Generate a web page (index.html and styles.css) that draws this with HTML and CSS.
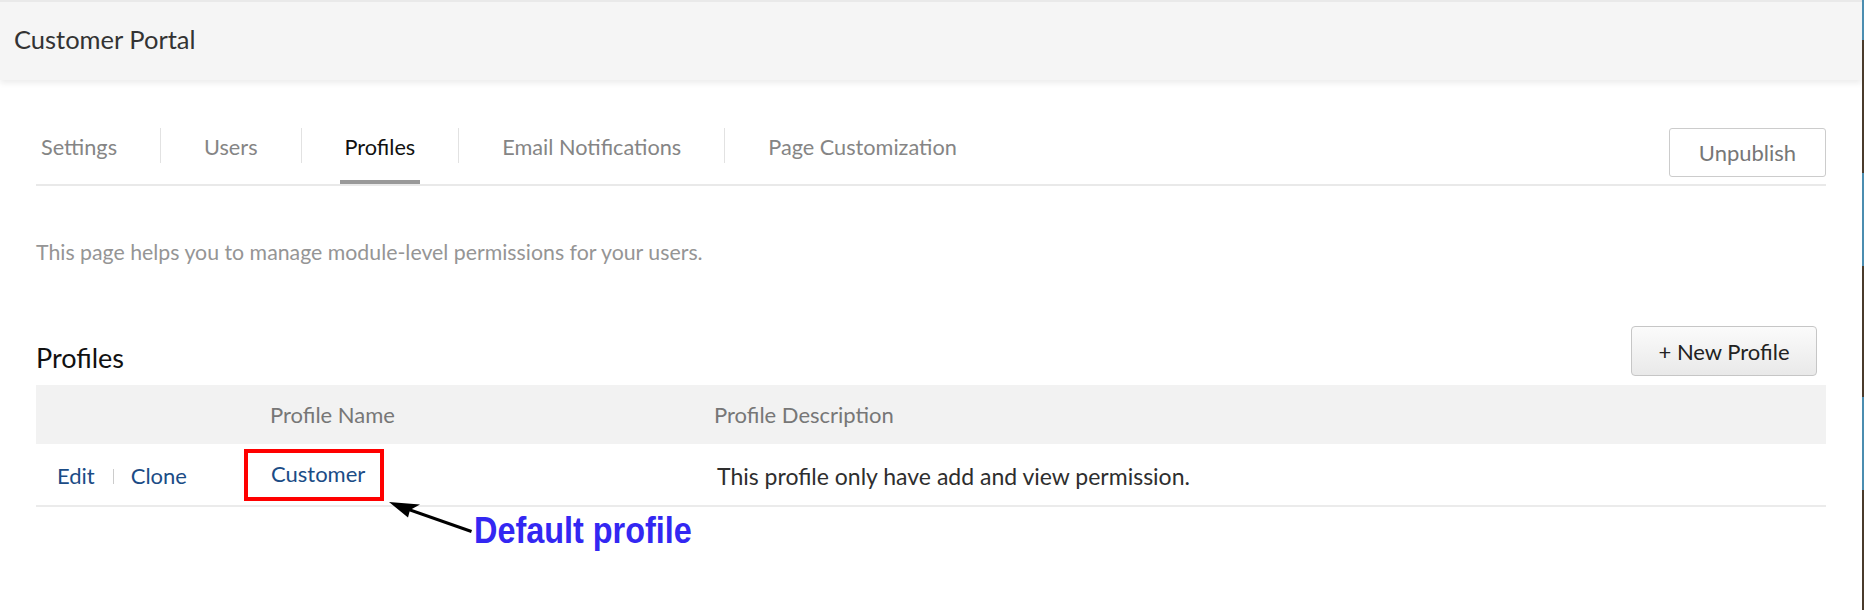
FILE: index.html
```html
<!DOCTYPE html>
<html>
  <head>
    <link rel="stylesheet" href="styles.css">
  </head>

  <body>
    <div class="page">
      <div class="main">
        <header class="topbar">
          <span class="title">Customer Portal</span>
        </header>

        <div class="content">
          <nav class="tabs">
            <a class="tab">Settings</a>
            <span class="sep"></span>
            <a class="tab">Users</a>
            <span class="sep"></span>
            <a class="tab active">Profiles</a>
            <span class="sep"></span>
            <a class="tab">Email Notifications</a>
            <span class="sep"></span>
            <a class="tab">Page Customization</a>
            <button class="btn-outline">Unpublish</button>
          </nav>

          <p class="intro">This page helps you to manage module-level permissions for your users.</p>

          <div class="section-head">
            <h2>Profiles</h2>
            <button class="btn-new">+ New Profile</button>
          </div>

          <div class="table">
            <div class="row thead">
              <div></div>
              <div>Profile Name</div>
              <div>Profile Description</div>
            </div>
            <div class="row trow">
              <div class="actions">
                <a>Edit</a>
                <span class="pipe"></span>
                <a>Clone</a>
              </div>
              <div class="name"><a>Customer</a></div>
              <div class="desc">This profile only have add and view permission.</div>
            </div>

            <!-- annotation drawn over the screenshot -->
            <div class="note-box"></div>
            <svg class="note-arrow" width="110" height="50" viewBox="0 0 110 50">
              <line x1="30" y1="19.5" x2="95.5" y2="42.5" stroke="#000" stroke-width="3"/>
              <polygon points="13,13 44,15.5 34,21 32,28.5" fill="#000"/>
            </svg>
            <span class="note-text">Default profile</span>
          </div>
        </div>
      </div>
      <div class="edge"></div>
    </div>
  </body>
</html>
```

FILE: styles.css
```css
* {
  box-sizing: border-box;
}

body {
  margin: 0;
  font-family: Lato, "Open Sans", sans-serif;
  color: #333;
  background: #fff;
}

.page {
  display: flex;
  min-height: 610px;
}

.main {
  flex: 1;
}

.edge {
  width: 2px;
  background: linear-gradient(to bottom,
    #4b8db0 0 40px, #4a3b2c 40px 173px,
    #4b8db0 173px 266px, #4a3b2c 266px 397px,
    #4b8db0 397px 490px, #4a3b2c 490px);
}

.topbar {
  height: 80px;
  display: flex;
  align-items: center;
  padding: 0 14px 4px;
  border-top: 2px solid #e9e9e9;
  background: #f5f5f5;
  box-shadow: 0 3px 6px rgba(0, 0, 0, 0.08);
}

.title {
  font-size: 25.5px;
  color: #333;
}

.content {
  padding: 48px 36px 0;
}

/* tabs */
.tabs {
  display: flex;
  align-items: flex-end;
  gap: 38px;
  border-bottom: 2px solid #e9e9e9;
}

.tab {
  font-size: 21.7px;
  line-height: 26px;
  color: #858585;
  padding: 0 5px 20px;
  border-bottom: 4px solid transparent;
  cursor: pointer;
}

.tab.active {
  color: #111;
  border-bottom-color: #999;
}

.sep {
  width: 1px;
  height: 35px;
  margin-bottom: 21px;
  background: #e2e2e2;
}

.btn-outline {
  margin-left: auto;
  margin-bottom: 7px;
  width: 157px;
  height: 49px;
  padding: 0;
  font-family: inherit;
  font-size: 22px;
  color: #777;
  background: #fff;
  border: 1px solid #ccc;
  border-radius: 3px;
}

.intro {
  margin: 54px 0 0;
  font-size: 21.3px;
  line-height: 24px;
  color: #959595;
}

.section-head {
  display: flex;
  align-items: flex-end;
  justify-content: space-between;
  margin-top: 62px;
}

.section-head h2 {
  margin: 0 0 2px;
  font-size: 27px;
  font-weight: 400;
  line-height: 32px;
  color: #111;
}

.btn-new {
  width: 186px;
  height: 50px;
  margin-right: 9px;
  padding: 0;
  font-family: inherit;
  font-size: 22px;
  color: #222;
  border: 1px solid #c6c6c6;
  border-radius: 4px;
  background: linear-gradient(#fbfbfb, #e9e9e9);
}

/* table */
.table {
  position: relative;
  margin-top: 9px;
}

.row {
  display: grid;
  grid-template-columns: 234px 444px 1fr;
  align-items: center;
  font-size: 22px;
  line-height: 26px;
}

.thead {
  height: 59px;
  background: #f2f2f2;
  color: #777;
}

.trow {
  height: 63px;
  padding-top: 3px;
  border-bottom: 2px solid #ebebeb;
}

.trow a {
  color: #1b4c86;
  cursor: pointer;
}

.actions {
  display: flex;
  align-items: center;
  padding-left: 21px;
}

.pipe {
  width: 1px;
  height: 15px;
  margin: 0 17px 0 18px;
  background: #ccc;
}

.name {
  padding-left: 1px;
  padding-bottom: 4px;
}

.desc {
  padding-left: 3px;
  font-size: 23px;
  color: #2e2e2e;
}

/* annotation */
.note-box {
  position: absolute;
  left: 208px;
  top: 64px;
  width: 140px;
  height: 52px;
  border: 4px solid #ff0000;
}

.note-arrow {
  position: absolute;
  left: 340px;
  top: 104px;
}

.note-text {
  position: absolute;
  left: 438px;
  top: 126px;
  font-family: "Liberation Sans", Arial, sans-serif;
  font-weight: 700;
  font-size: 36px;
  line-height: 40px;
  color: #3327f2;
  white-space: nowrap;
  transform: scaleX(0.9);
  transform-origin: left center;
}
```
